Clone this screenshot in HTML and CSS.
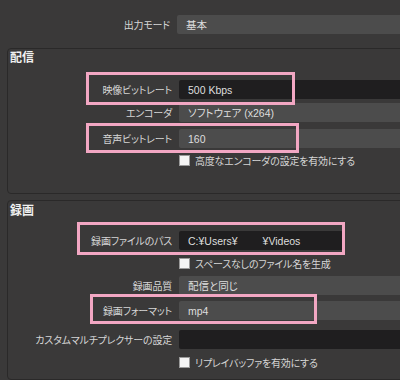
FILE: index.html
```html
<!DOCTYPE html>
<html lang="ja">
<head>
<meta charset="utf-8">
<link rel="stylesheet" href="styles.css">
</head>
<body>
<div class="page">
  <div class="row top">
    <span class="lbl">出力モード</span>
    <div class="field combo">基本</div>
  </div>

  <section class="group g-stream">
    <div class="gtitle">配信</div>
    <div class="row mt16">
      <span class="lbl">映像ビットレート</span>
      <div class="field input">500 Kbps</div>
    </div>
    <div class="row mt4">
      <span class="lbl">エンコーダ</span>
      <div class="field combo">ソフトウェア (x264)</div>
    </div>
    <div class="row mt7">
      <span class="lbl">音声ビットレート</span>
      <div class="field combo">160</div>
    </div>
    <div class="row cbrow mt6">
      <span class="lbl"></span>
      <span class="cb"></span><span class="cbtext">高度なエンコーダの設定を有効にする</span>
    </div>
  </section>

  <section class="group g-rec">
    <div class="gtitle">録画</div>
    <div class="row mt14">
      <span class="lbl">録画ファイルのパス</span>
      <div class="field input path">C:¥Users¥<span class="blank"></span>¥Videos</div>
    </div>
    <div class="row cbrow mt7">
      <span class="lbl"></span>
      <span class="cb"></span><span class="cbtext">スペースなしのファイル名を生成</span>
    </div>
    <div class="row mt6">
      <span class="lbl">録画品質</span>
      <div class="field combo">配信と同じ</div>
    </div>
    <div class="row mt6">
      <span class="lbl">録画フォーマット</span>
      <div class="field combo">mp4</div>
    </div>
    <div class="row mt10">
      <span class="lbl">カスタムマルチプレクサーの設定</span>
      <div class="field input"></div>
    </div>
    <div class="row cbrow mt7">
      <span class="lbl"></span>
      <span class="cb"></span><span class="cbtext">リプレイバッファを有効にする</span>
    </div>
  </section>

  <div class="hl hl-1"></div>
  <div class="hl hl-2"></div>
  <div class="hl hl-3"></div>
  <div class="hl hl-4"></div>
</div>
</body>
</html>
```

FILE: styles.css
```css
html, body {
  margin: 0;
  padding: 0;
}

body {
  background: #3a3939;
  font-family: "Noto Sans CJK JP", "Noto Sans", sans-serif;
  font-size: 10px;
  letter-spacing: -0.2px;
  color: #d6d6d6;
  font-feature-settings: "palt";
}

.page {
  position: relative;
  width: 400px;
  height: 380px;
  overflow: hidden;
  padding-top: 15px;
  box-sizing: border-box;
}

.row {
  display: flex;
  align-items: center;
  height: 19px;
  gap: 7px;
}

.lbl {
  flex: none;
  width: 164px;
  text-align: right;
  white-space: nowrap;
  line-height: 19px;
}

.top .lbl {
  width: 170px;
}

.field {
  flex: none;
  width: 240px;
  height: 19px;
  box-sizing: border-box;
  padding-left: 9px;
  display: flex;
  align-items: center;
  border-radius: 2px;
  white-space: nowrap;
  color: #dedede;
  font-family: "Liberation Sans", "Noto Sans CJK JP", sans-serif;
  font-size: 10.5px;
  letter-spacing: 0;
}

.combo {
  background: #4c4c4c;
}

.input {
  background: #1f1e1f;
}

.path {
  width: 164px;
}

.blank {
  display: inline-block;
  width: 25px;
}

.group {
  margin-left: 7px;
  width: 420px;
  border: 1px solid #2a2929;
  border-radius: 4px;
  box-sizing: border-box;
}

.g-stream {
  margin-top: 14px;
  height: 146px;
}

.g-rec {
  margin-top: 6px;
  height: 180px;
}

.gtitle {
  font-size: 12px;
  font-weight: bold;
  line-height: 14px;
  letter-spacing: 0;
  color: #f0f0f0;
  padding-left: 2px;
  margin-top: 1px;
}

.g-rec .gtitle {
  margin-top: 2px;
}

.cbrow {
  height: 13px;
  gap: 0;
}

.cbrow .lbl {
  margin-right: 7px;
}

.cb {
  flex: none;
  width: 11px;
  height: 11px;
  box-sizing: border-box;
  background: #f4f4f4;
  border: 1px solid #9a9a9a;
  margin-right: 5px;
}

.cbtext {
  white-space: nowrap;
  line-height: 13px;
}

.mt4 { margin-top: 4px; }
.mt6 { margin-top: 6px; }
.mt7 { margin-top: 7px; }
.mt10 { margin-top: 10px; }
.mt14 { margin-top: 14px; }
.mt16 { margin-top: 16px; }

.hl {
  position: absolute;
  border: 3px solid #f2a7c3;
  box-sizing: border-box;
}

.hl-1 { left: 86px; top: 72px; width: 209px; height: 33px; }
.hl-2 { left: 86px; top: 123px; width: 213px; height: 30px; }
.hl-3 { left: 77px; top: 222px; width: 268px; height: 33px; }
.hl-4 { left: 90px; top: 294px; width: 227px; height: 30px; }
```
